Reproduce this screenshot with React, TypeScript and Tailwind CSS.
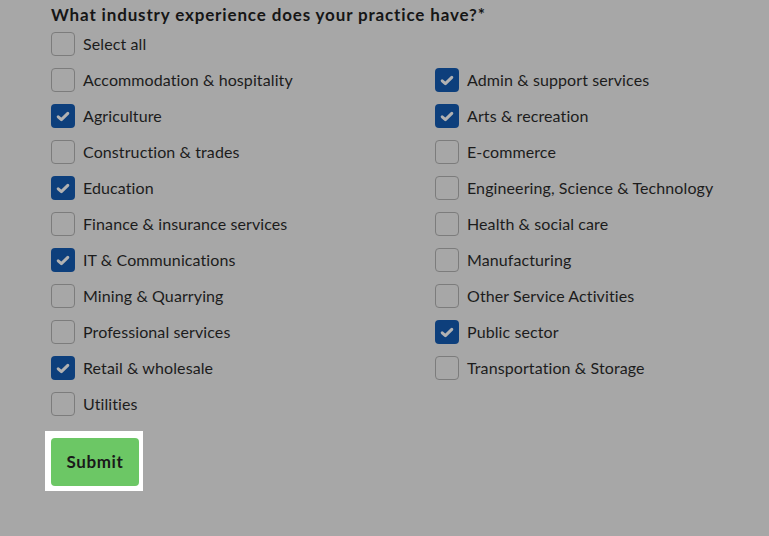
import React from "react";

const left: [string, boolean][] = [
  ["Accommodation & hospitality", false],
  ["Agriculture", true],
  ["Construction & trades", false],
  ["Education", true],
  ["Finance & insurance services", false],
  ["IT & Communications", true],
  ["Mining & Quarrying", false],
  ["Professional services", false],
  ["Retail & wholesale", true],
  ["Utilities", false],
];
const right: [string, boolean][] = [
  ["Admin & support services", true],
  ["Arts & recreation", true],
  ["E-commerce", false],
  ["Engineering, Science & Technology", false],
  ["Health & social care", false],
  ["Manufacturing", false],
  ["Other Service Activities", false],
  ["Public sector", true],
  ["Transportation & Storage", false],
];

function Box({ checked }: { checked: boolean }) {
  return checked ? (
    <span className="flex h-6 w-6 shrink-0 items-center justify-center rounded-[4px] bg-[#0d3f7c]">
      <svg width="14" height="11" viewBox="0 0 14 11" fill="none">
        <path d="M2.2 5.8 L5.4 8.6 L11.8 2.4" stroke="#b2b2b2" strokeWidth="3" strokeLinecap="round" strokeLinejoin="round" />
      </svg>
    </span>
  ) : (
    <span className="h-6 w-6 shrink-0 rounded-[4px] border border-[#7c7c7c]" />
  );
}

function Row({ label, checked }: { label: string; checked: boolean }) {
  return (
    <div className="flex h-9 items-center gap-2">
      <Box checked={checked} />
      <span className="text-[16px] tracking-[0.1px] text-[#1c1c1c]">{label}</span>
    </div>
  );
}

export default function App() {
  return (
    <div className="min-h-[536px] w-full bg-[#a7a7a7] pl-[51px] pt-[4px] font-['Lato',sans-serif]">
      <div className="text-[17px] font-bold leading-[22px] tracking-[0.85px] text-[#161616]">
        What industry experience does your practice have?*
      </div>
      <Row label="Select all" checked={false} />
      <div className="grid grid-cols-[384px_1fr]">
        <div className="flex flex-col">
          {left.map(([l, c]) => (
            <Row key={l} label={l} checked={c} />
          ))}
        </div>
        <div className="flex flex-col">
          {right.map(([l, c]) => (
            <Row key={l} label={l} checked={c} />
          ))}
        </div>
      </div>
      <div className="ml-[-6px] mt-[9px] inline-block bg-white pb-[5px] pl-[6px] pr-[4px] pt-[7px]">
        <button className="block h-[48px] w-[88px] rounded-[4px] bg-[#6cc765] text-[17px] font-bold tracking-[0.6px] text-[#1a1a1a]">
          Submit
        </button>
      </div>
    </div>
  );
}
